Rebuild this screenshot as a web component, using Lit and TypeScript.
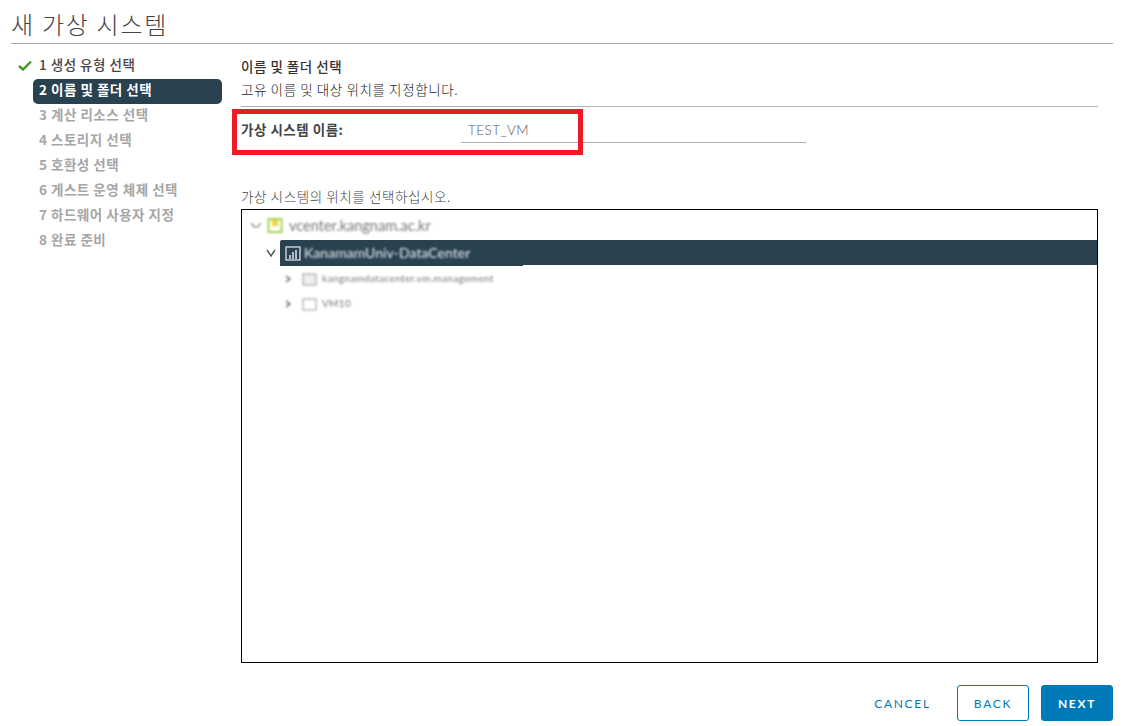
import { LitElement, html, css } from "lit";
import { customElement } from "lit/decorators.js";

const steps = [
  "1 생성 유형 선택",
  "2 이름 및 폴더 선택",
  "3 계산 리소스 선택",
  "4 스토리지 선택",
  "5 호환성 선택",
  "6 게스트 운영 체제 선택",
  "7 하드웨어 사용자 지정",
  "8 완료 준비",
];

@customElement("app-root")
export class AppRoot extends LitElement {
  static styles = css`
    :host { display: block; width: 1122px; height: 726px; background: #fff; overflow: hidden; position: relative;
      font-family: "Noto Sans CJK KR", sans-serif; color: #333; }
    .title { margin: 0 9px 0 11px; height: 44px; box-sizing: border-box; border-bottom: 1px solid #a8a8a8;
      font-size: 24px; font-weight: 300; line-height: 32px; padding-top: 8px; letter-spacing: 1.75px; color: #444; }
    .body { display: flex; height: 682px; }
    .nav { width: 222px; flex: none; padding: 10px 0 0 33px; box-sizing: border-box; }
    .step { position: relative; height: 25px; line-height: 21px; padding-left: 6px; border-radius: 5px; width: 189px; box-sizing: border-box;
      font-size: 13.5px; font-weight: 700; color: #a6a6a6; white-space: nowrap; letter-spacing: 0.5px; }
    .step.done { color: #444; font-weight: 500; }
    .step.active { background: #2a4150; color: #fff; }
    .check { position: absolute; left: -15px; top: 6px; }
    .main { margin-left: 19px; width: 857px; display: flex; flex-direction: column; }
    .h { font-size: 13.5px; font-weight: 500; line-height: 18px; margin-top: 13px; color: #333; letter-spacing: 0.5px; }
    .sub { font-size: 13.5px; font-weight: 300; line-height: 18px; margin-top: 5px; padding-bottom: 8px; border-bottom: 1px solid #b5b5b5; color: #222; letter-spacing: 0.6px; }
    .row { display: flex; align-items: flex-start; height: 80px; }
    .label { width: 220px; font-size: 13.5px; font-weight: 700; color: #444; line-height: 18px; margin-top: 13px; letter-spacing: 0.5px; }
    .input { width: 345px; height: 25px; margin-top: 11px; box-sizing: border-box; border-bottom: 1px solid #b0b0b0; padding: 2px 0 0 7px;
      font: 300 13.5px/20px "Lato", sans-serif; color: #555; letter-spacing: 0.45px; }
    .loc { font-size: 13.5px; font-weight: 300; line-height: 18px; color: #444; letter-spacing: 0.6px; margin-bottom: 4px; }
    .tree { height: 454px; border: 1px solid #000; box-sizing: border-box; position: relative; }
    .node { display: flex; align-items: center; height: 25px; white-space: nowrap; filter: blur(0.9px);
      font: 400 14.5px/25px "Lato", sans-serif; color: #777; }
    .n0 { margin-top: 4px; height: 26px; padding: 0 0 4px 9px; box-sizing: border-box; gap: 6px; }
    .n1 { position: relative; padding-left: 24px; filter: none; }
    .sel { position: absolute; left: 38px; right: 0; top: 0; bottom: 0; background: #2a4150; border-radius: 2px 0 0 2px; }
    .selx { position: absolute; left: 38px; width: 243px; top: 24px; height: 2px; background: #2a4150; }
    .n1 .tx { position: relative; filter: blur(0.8px); color: #e8edf0; font-size: 14px; margin-left: 3px; letter-spacing: 0.05px; }
    .n1 svg { position: relative; filter: blur(0.7px); }
    .n2 { padding-left: 43px; gap: 4px; font-size: 10px; color: #777; letter-spacing: 0.35px; }
    .n2.first { margin-top: 1px; }
    .foot { position: absolute; right: 9px; top: 685px; display: flex; align-items: center; }
    .btn { width: 72px; height: 36px; box-sizing: border-box; border-radius: 3px; font: 400 12px/35px "Lato", sans-serif; letter-spacing: 1.7px; text-align: center; border: 1px solid #0079b8; color: #0079b8; background: #fff; }
    .btn.link { border: none; width: 57px; margin-right: 26px; line-height: 37px; }
    .btn.pri { background: #0079b8; color: #fff; margin-left: 12px; font-weight: 700; }
    .mark { position: absolute; left: 232px; top: 109px; width: 351px; height: 46px; box-sizing: border-box; border: 5px solid #ed1c24; }
  `;

  render() {
    return html`
      <div class="title">새 가상 시스템</div>
      <div class="body">
        <div class="nav">
          ${steps.map((s, i) => html`<div class="step ${i === 0 ? "done" : i === 1 ? "active" : ""}">
            ${i === 0 ? html`<svg class="check" width="14" height="11" viewBox="0 0 14 11"><path d="M1 6 L5 9.5 L13 1.5" fill="none" stroke="#3c9a1c" stroke-width="2.4"/></svg>` : ""}${s}</div>`)}
        </div>
        <div class="main">
          <div class="h">이름 및 폴더 선택</div>
          <div class="sub">고유 이름 및 대상 위치를 지정합니다.</div>
          <div class="row">
            <div class="label">가상 시스템 이름:</div>
            <div class="input">TEST_VM</div>
          </div>
          <div class="loc">가상 시스템의 위치를 선택하십시오.</div>
          <div class="tree">
            <div class="node n0">
              <svg width="10" height="10" viewBox="0 0 10 10"><path d="M1 3 A4 4 0 0 0 9 3" fill="none" stroke="#666" stroke-width="1.2"/></svg>
              <svg width="16" height="17" viewBox="0 0 16 17"><rect x="1.5" y="2" width="13" height="13" fill="#fff" stroke="#a6d14f" stroke-width="2"/><rect x="5" y="3" width="6" height="6" fill="#f7cf40"/></svg>
              <span>vcenter.kangnam.ac.kr</span>
            </div>
            <div class="node n1">
              <div class="sel"></div><div class="selx"></div>
              <svg width="10" height="10" viewBox="0 0 10 10" style="margin-right:9px"><path d="M1 2 L5 8 L9 2" fill="none" stroke="#555" stroke-width="1.4"/></svg>
              <svg width="16" height="16" viewBox="0 0 16 16"><rect x="1" y="2" width="14" height="13" fill="none" stroke="#cfd6da" stroke-width="1.4"/><path d="M8 7 V14 M5 10 V14 M11 5 V14" stroke="#eef" stroke-width="1.4"/></svg>
              <span class="tx">KanamamUniv-DataCenter</span>
            </div>
            <div class="node n2 first">
              <svg width="6" height="8" viewBox="0 0 6 8"><path d="M1 1 L5 4 L1 7" fill="none" stroke="#555" stroke-width="1.2"/></svg>
              <svg width="16" height="14" viewBox="0 0 16 14" style="margin-left:7px"><rect x="1" y="2" width="13" height="11" fill="#eee" stroke="#999"/></svg>
              <span>kangnamdatacenter.vm.management</span>
            </div>
            <div class="node n2">
              <svg width="6" height="8" viewBox="0 0 6 8"><path d="M1 1 L5 4 L1 7" fill="none" stroke="#555" stroke-width="1.2"/></svg>
              <svg width="16" height="14" viewBox="0 0 16 14" style="margin-left:7px"><rect x="1" y="2" width="13" height="11" fill="#fff" stroke="#999"/></svg>
              <span>VM10</span>
            </div>
          </div>
        </div>
      </div>
      <div class="mark"></div>
      <div class="foot">
        <div class="btn link">CANCEL</div>
        <div class="btn">BACK</div>
        <div class="btn pri">NEXT</div>
      </div>
    `;
  }
}
